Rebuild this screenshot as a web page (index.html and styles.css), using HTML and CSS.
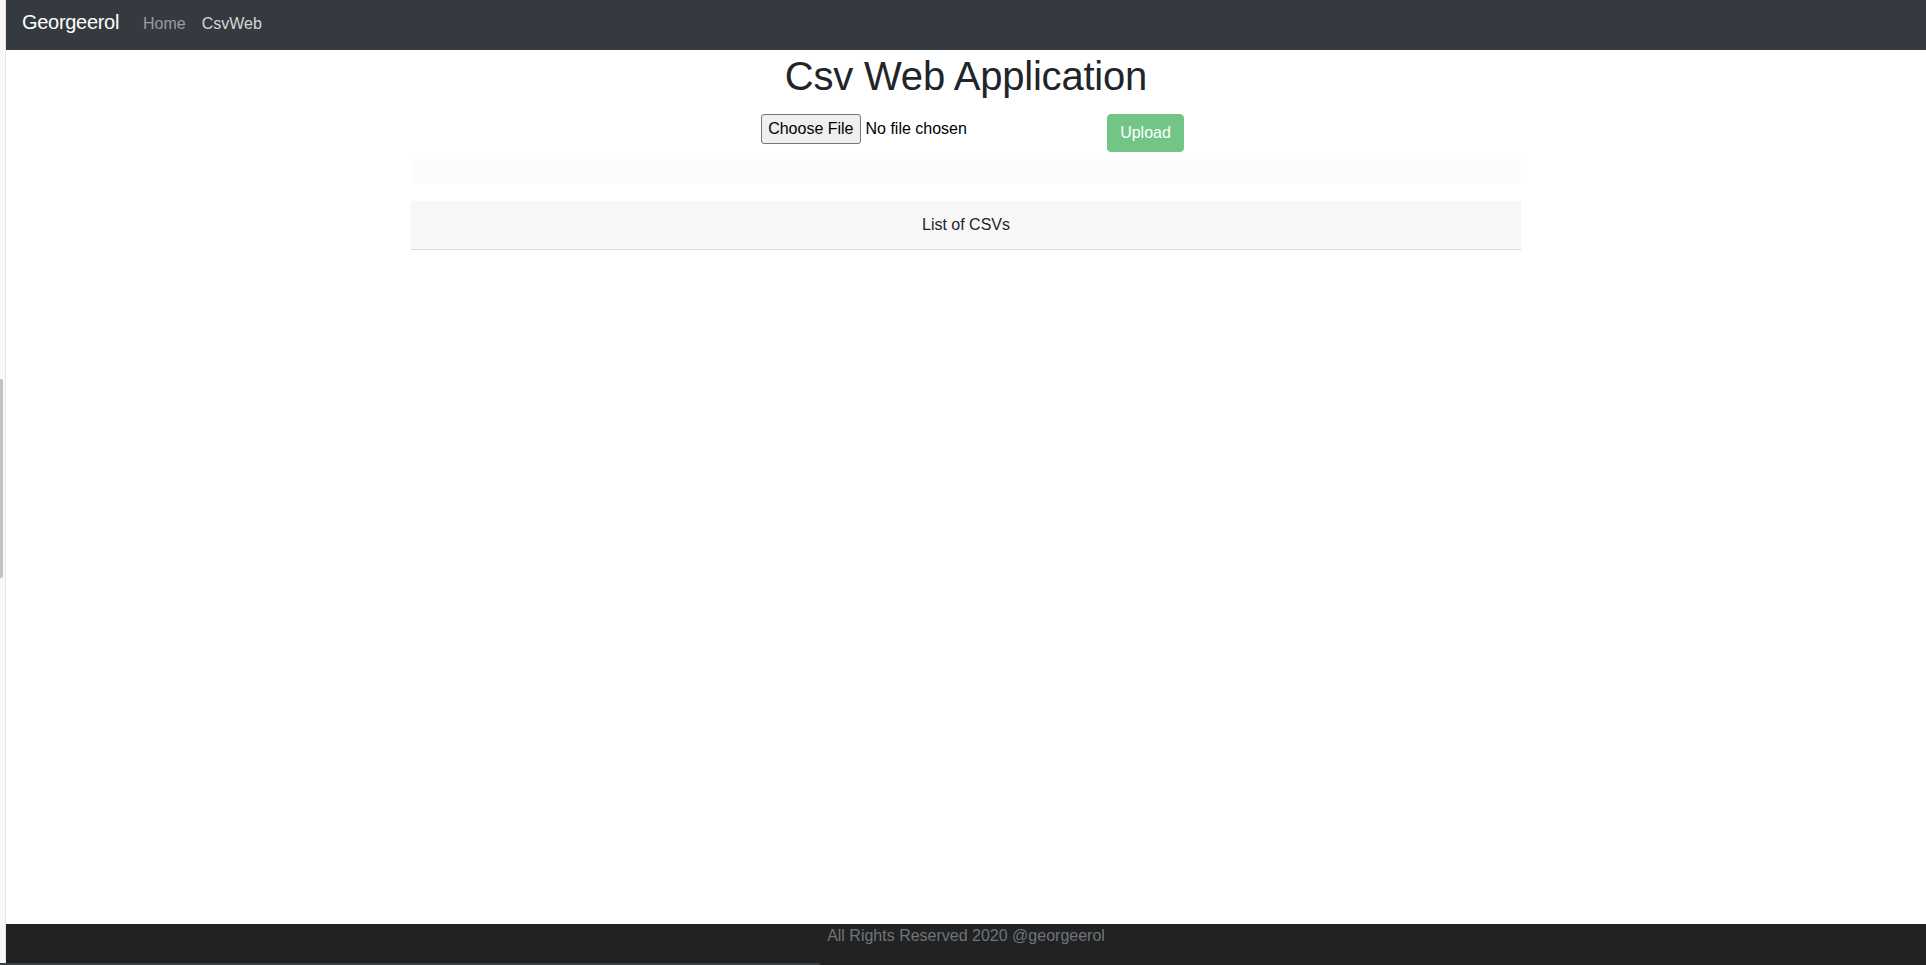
FILE: index.html
```html
<!DOCTYPE html>
<html lang="en">
<head>
<meta charset="utf-8">
<title>Csv Web Application</title>
<link rel="stylesheet" href="styles.css">
</head>
<body>
  <aside class="side-strip"><div class="side-thumb"></div></aside>
  <div class="page">
    <nav class="navbar">
      <a class="brand" href="#">Georgeerol</a>
      <a class="nav-link" href="#">Home</a>
      <a class="nav-link active" href="#">CsvWeb</a>
    </nav>
    <main class="main">
      <h1 class="title">Csv Web Application</h1>
      <form class="upload-row">
        <input class="file-input" type="file" accept=".csv">
        <button class="btn-upload" type="submit" disabled>Upload</button>
      </form>
      <div class="container">
        <div class="light-strip"></div>
        <div class="card">
          <div class="card-header">List of CSVs</div>
        </div>
      </div>
    </main>
    <footer class="footer">All Rights Reserved 2020 @georgeerol</footer>
  </div>
  <div class="bottom-bar"></div>
</body>
</html>
```

FILE: styles.css
```css
html, body {
  margin: 0;
  padding: 0;
  height: 100%;
}
body {
  position: relative;
  display: flex;
  min-height: 965px;
  font-family: "Liberation Sans", Arial, Helvetica, sans-serif;
  font-size: 16px;
  line-height: 24px;
  color: #212529;
  background: #fff;
  overflow: hidden;
}
.side-strip {
  width: 5px;
  flex: 0 0 5px;
  background: #f9f9f9;
  border-right: 1px solid #e6e6e6;
  display: flex;
  flex-direction: column;
}
.side-thumb {
  margin-top: 379px;
  width: 3px;
  height: 199px;
  background: #c1c1c1;
  border-radius: 0 2px 2px 0;
}
.page {
  flex: 1;
  display: flex;
  flex-direction: column;
  min-height: 965px;
}
.navbar {
  height: 50px;
  box-sizing: border-box;
  background: #343a40;
  display: flex;
  align-items: baseline;
  padding: 7px 16px 0;
}
.brand {
  font-size: 20px;
  line-height: 30px;
  letter-spacing: -0.3px;
  color: #fff;
  text-decoration: none;
  margin-right: 16px;
}
.nav-link {
  padding: 0 8px;
  color: rgba(255, 255, 255, 0.5);
  text-decoration: none;
}
.nav-link.active {
  color: rgba(255, 255, 255, 0.8);
}
.main {
  flex: 1;
  display: flex;
  flex-direction: column;
  align-items: center;
}
.title {
  margin: 2px 0 0;
  font-size: 40px;
  line-height: 48px;
  font-weight: 500;
  letter-spacing: -0.2px;
  color: #212529;
}
.upload-row {
  margin: 14px 0 0;
  padding-left: 13px;
  display: flex;
  align-items: flex-start;
  justify-content: center;
}
.file-input {
  width: 334px;
  margin-right: 12px;
  font-family: "Liberation Sans", Arial, Helvetica, sans-serif;
  font-size: 16px;
  color: #000;
}
.file-input::file-selector-button {
  height: 30px;
  padding: 0 6px;
  margin-right: 5px;
  font-family: "Liberation Sans", Arial, Helvetica, sans-serif;
  font-size: 16px;
  color: #000;
  background: #efefef;
  border: 1px solid #767676;
  border-radius: 3px;
}
.btn-upload {
  font-family: "Liberation Sans", Arial, Helvetica, sans-serif;
  font-size: 16px;
  line-height: 24px;
  padding: 6px 12px;
  color: #fff;
  background: #28a745;
  border: 1px solid #28a745;
  border-radius: 4px;
  opacity: 0.65;
}
.container {
  width: 1110px;
  margin-top: 7px;
  display: flex;
  flex-direction: column;
}
.light-strip {
  height: 25px;
  background: #fcfcfc;
}
.card {
  margin-top: 17px;
}
.card-header {
  padding: 12px 20px;
  text-align: center;
  background: #f7f7f7;
  border-bottom: 1px solid #dcdcdc;
  color: #212529;
}
.footer {
  height: 41px;
  box-sizing: border-box;
  background: #222222;
  color: #6c757d;
  text-align: center;
}
.bottom-bar {
  position: absolute;
  left: 0;
  bottom: 0;
  width: 820px;
  height: 2px;
  background: #3a3d41;
}
```
